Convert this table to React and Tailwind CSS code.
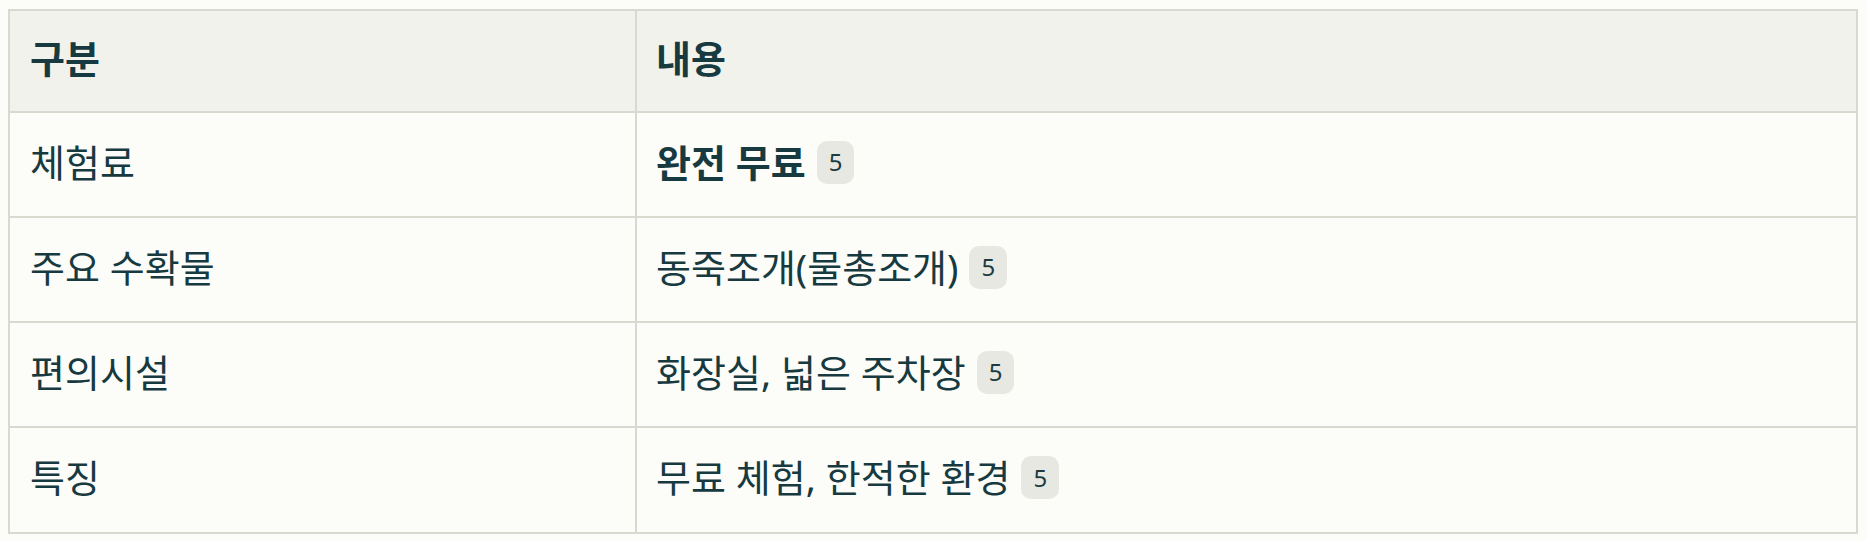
/**
 * Info table: 구분 / 내용 rows with small citation badges.
 */
const rows = [
  { label: '체험료', value: '완전 무료', bold: true, cite: 5 },
  { label: '주요 수확물', value: '동죽조개(물총조개)', cite: 5 },
  { label: '편의시설', value: '화장실, 넓은 주차장', cite: 5 },
  { label: '특징', value: '무료 체험, 한적한 환경', cite: 5 },
];

function Cite({ n }) {
  return (
    <span className="ml-[11px] inline-flex h-[43px] items-center rounded-[10px] bg-[#e7e8e2] px-[12px] text-[24px] leading-none text-[#1d3c42]">
      {n}
    </span>
  );
}

export default function App() {
  return (
    <div
      className="min-h-screen bg-[#fcfcf8] pt-[9px] px-[8px] text-[#173a40]"
      style={{ fontFamily: '"Noto Sans", "Noto Sans CJK KR", sans-serif' }}
    >
      <div className="border-2 border-[#d9d9cf] text-[38px]">
        {/* Header row */}
        <div className="grid h-[102px] grid-cols-[627px_1fr] border-b-2 border-[#d9d9cf] bg-[#f2f2ed] font-bold">
          <div className="flex items-center border-r-2 border-[#d9d9cf] px-[20px] pb-[5px]">구분</div>
          <div className="flex items-center px-[19px] pb-[5px]">내용</div>
        </div>

        {/* Body rows */}
        {rows.map((row, idx) => (
          <div
            key={row.label}
            className={`grid grid-cols-[627px_1fr] ${
              idx < rows.length - 1 ? 'h-[105px] border-b-2 border-[#d9d9cf]' : 'h-[104px]'
            }`}
          >
            <div className="flex items-center border-r-2 border-[#d9d9cf] px-[20px] pb-[5px]">{row.label}</div>
            <div className="flex items-center px-[19px] pb-[5px]">
              <span className={row.bold ? 'font-bold' : ''}>{row.value}</span>
              <Cite n={row.cite} />
            </div>
          </div>
        ))}
      </div>
    </div>
  );
}
